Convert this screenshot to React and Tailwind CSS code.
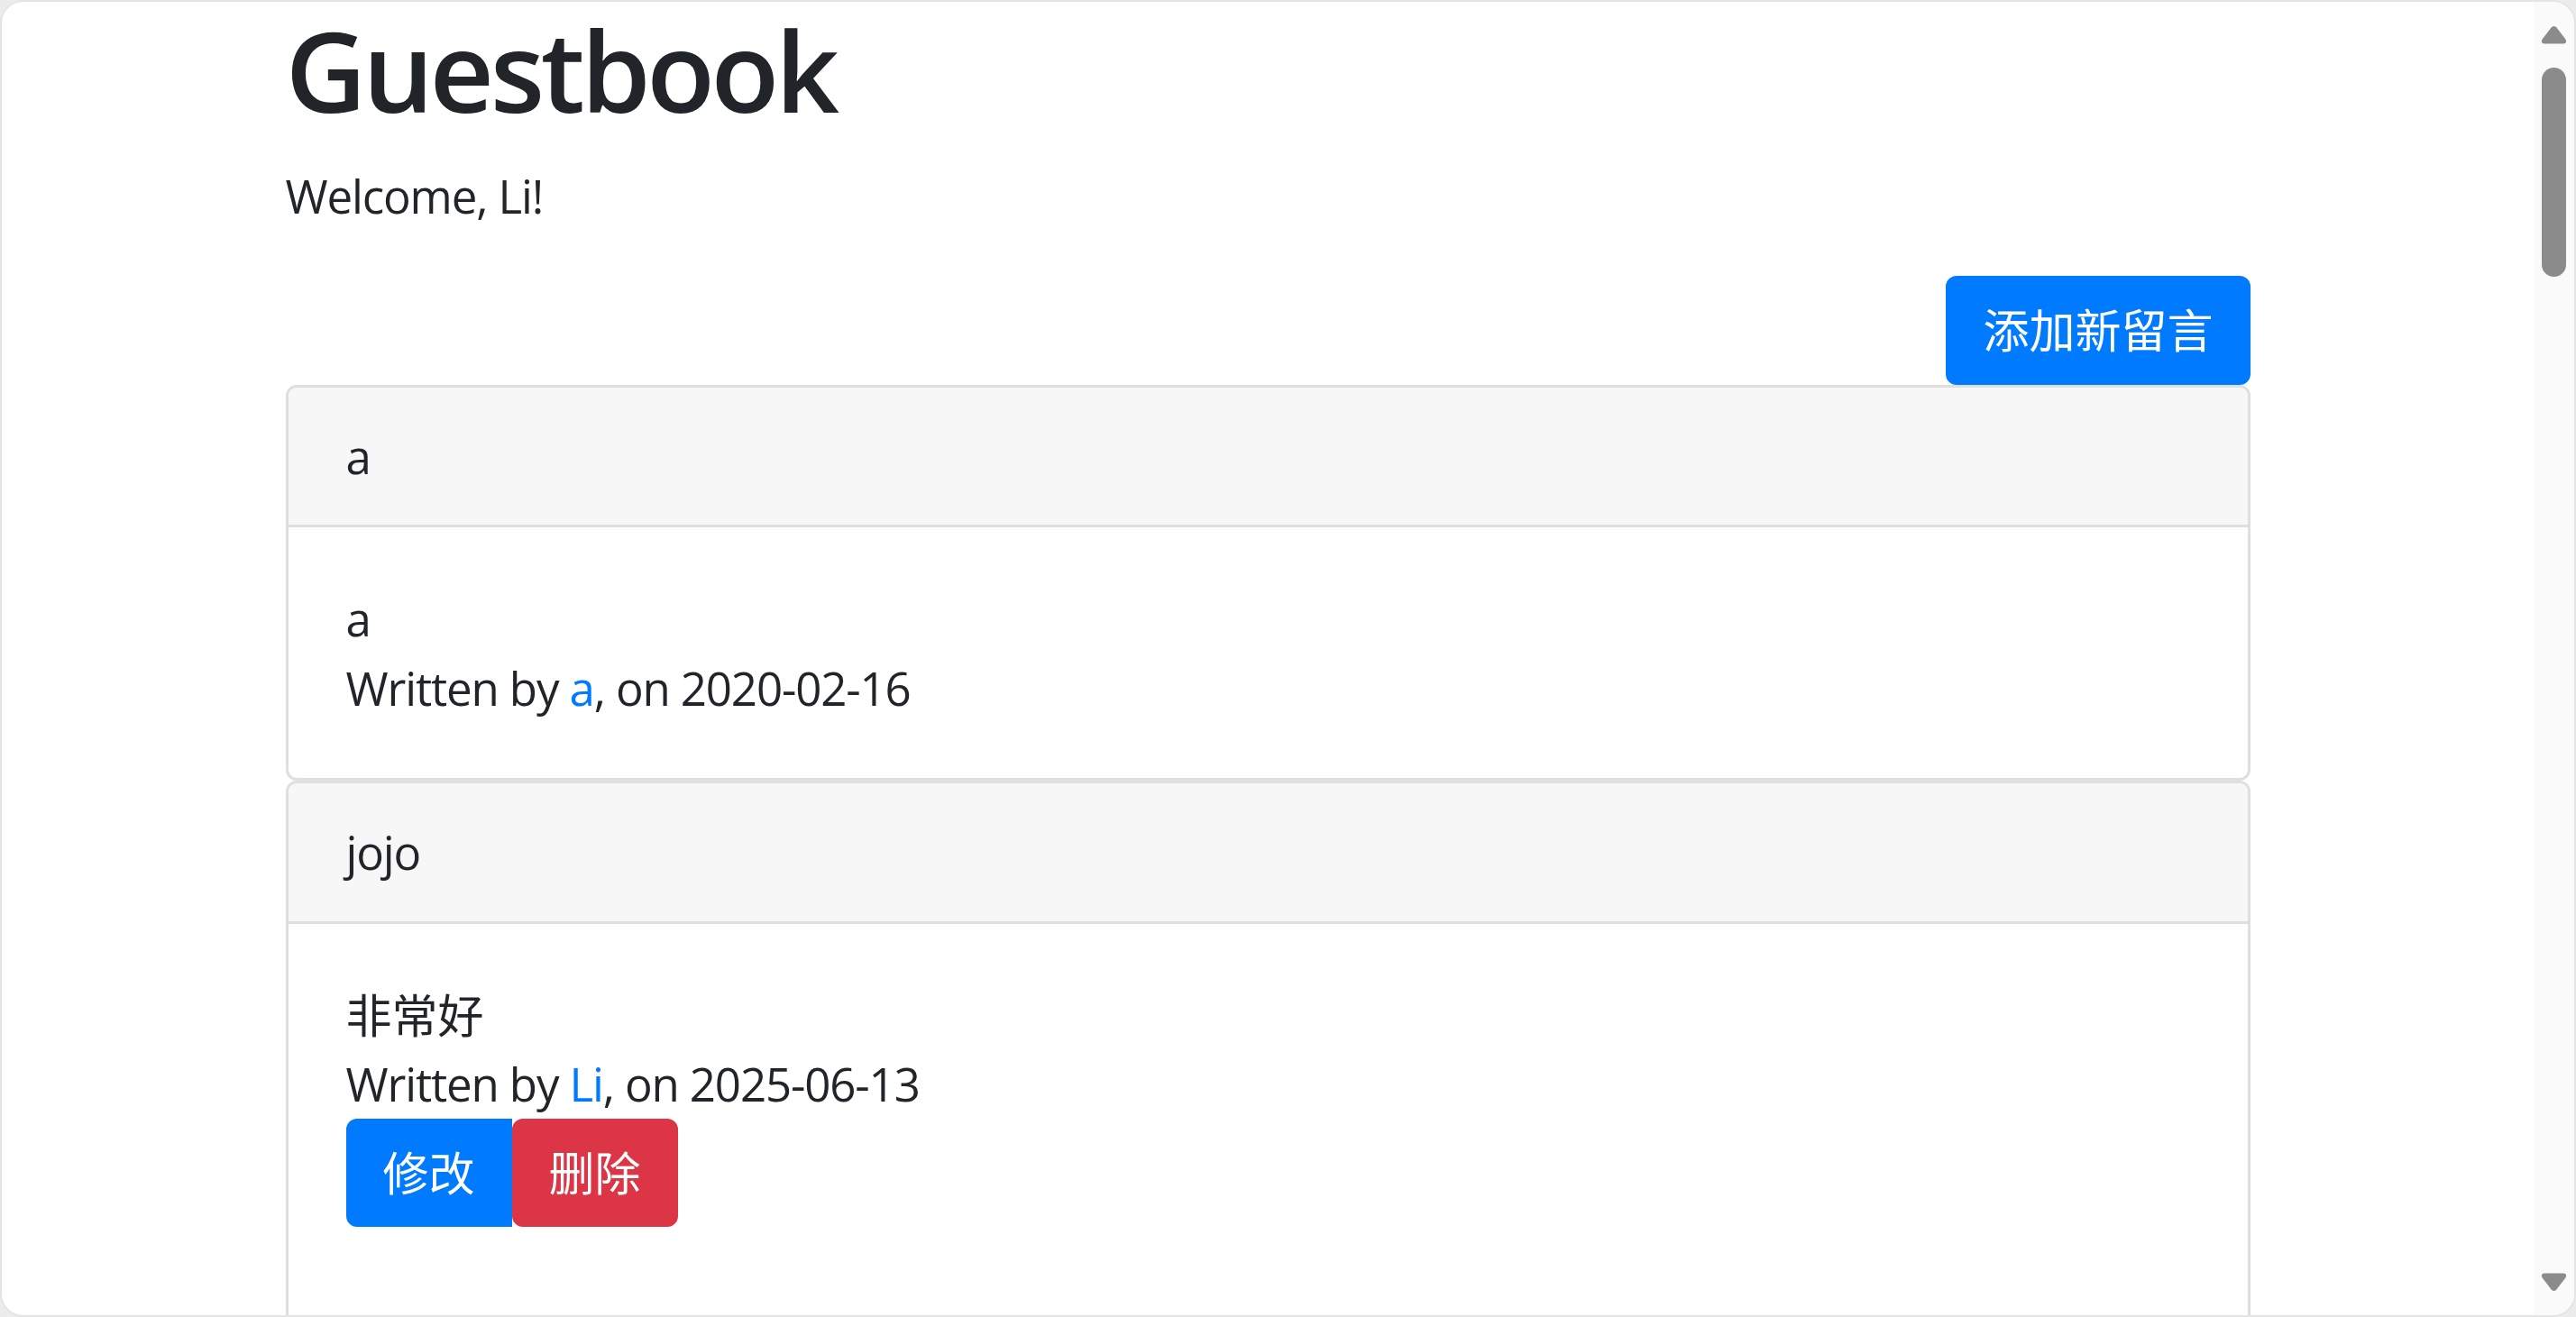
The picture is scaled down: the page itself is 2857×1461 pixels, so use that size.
import React from 'react';

const entries = [
  { id: 1, title: 'a', body: 'a', author: 'a', date: '2020-02-16', mine: false },
  { id: 2, title: 'jojo', body: '非常好', author: 'Li', date: '2025-06-13', mine: true },
];

function ScrollArrow({ down }) {
  return (
    <svg width="29" height="21" viewBox="0 0 29 21" className={down ? 'rotate-180' : ''}>
      <path d="M11.6 2.6 Q14.5 -0.6 17.4 2.6 L27.4 15.6 Q29.6 19.8 25 20.4 L4 20.4 Q-0.6 19.8 1.6 15.6 Z" fill="#8b8b8b" />
    </svg>
  );
}

function EntryCard({ entry }) {
  return (
    <div className="border-[3px] border-[#dfdfdf] rounded-[12px] bg-white">
      <div className="bg-[#f7f7f7] border-b-[3px] border-[#dfdfdf] rounded-t-[9px] px-[64px] py-[38px]">
        {entry.title}
      </div>
      <div className={entry.mine ? 'px-[64px] pt-[63px] pb-[200px]' : 'px-[64px] pt-[63px] pb-[62px]'}>
        <p className="tracking-normal">{entry.body}</p>
        <p>
          Written by <a className="text-[#007bff]">{entry.author}</a>, on {entry.date}
        </p>
        {entry.mine && (
          <div className="flex tracking-normal">
            <button className="bg-[#007bff] border-[3px] border-[#007bff] text-white rounded-l-[12px] px-[38px] py-[19px]">
              修改
            </button>
            <button className="bg-[#dc3545] border-[3px] border-[#dc3545] text-white rounded-[12px] px-[38px] py-[19px]">
              删除
            </button>
          </div>
        )}
      </div>
    </div>
  );
}

export default function App() {
  return (
    <div className="bg-[#ececec] w-[2857px] h-[1461px]">
      <div
        className="flex w-full h-full bg-white border-2 border-[#e4e4e4] rounded-[26px] overflow-hidden text-[#212529] text-[51px] leading-[76.5px] tracking-[-0.022em]"
        style={{ fontFamily: '"Open Sans", "Noto Sans CJK SC", sans-serif' }}
      >
        <div className="flex-1 overflow-hidden">
          <div className="w-[2179px] mx-auto -mt-[2px]">
            <h1 className="text-[124px] leading-[153px] font-semibold tracking-[-0.035em] mb-[25.5px]">Guestbook</h1>
            <p className="mb-[51px]">Welcome, Li!</p>
            <div className="flex justify-end tracking-normal">
              <button className="bg-[#007bff] border-[3px] border-[#007bff] text-white rounded-[12px] px-[38px] py-[19px]">
                添加新留言
              </button>
            </div>
            {entries.map((e) => (
              <EntryCard key={e.id} entry={e} />
            ))}
          </div>
        </div>

        {/* fake scrollbar */}
        <div className="w-[45px] bg-[#fafafa] flex flex-col items-center pt-[26px] pb-[26px]">
          <ScrollArrow />
          <div className="w-[27px] h-[232px] mt-[26px] bg-[#8b8b8b] rounded-full" />
          <div className="mt-auto">
            <ScrollArrow down />
          </div>
        </div>
      </div>
    </div>
  );
}
